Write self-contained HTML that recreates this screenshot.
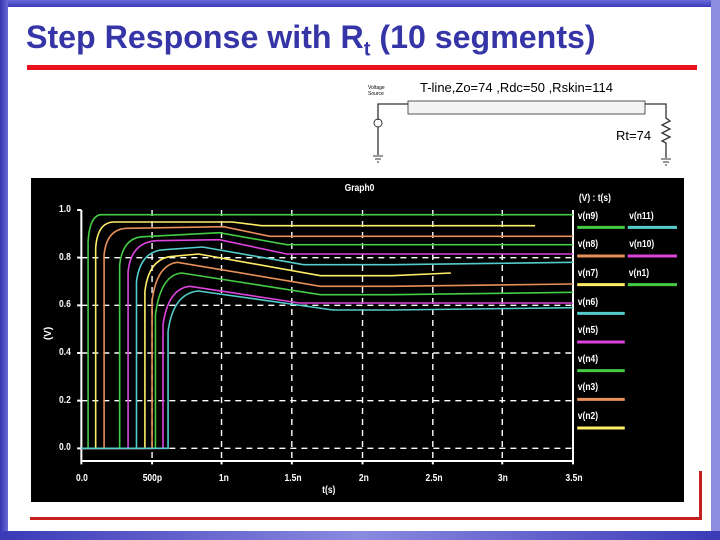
<!DOCTYPE html>
<html><head><meta charset="utf-8"><style>
body{margin:0;width:720px;height:540px;position:relative;background:#fff;overflow:hidden;font-family:"Liberation Sans",sans-serif}
.a{position:absolute}
.t{font-size:10px;color:#fff;font-weight:bold;transform:scaleX(.85)}
</style></head><body>
<div class="a" style="left:0;top:0;width:720px;height:7px;background:linear-gradient(#6868d8,#3a3ab8)"></div>
<div class="a" style="left:0;top:0;width:8px;height:540px;background:linear-gradient(90deg,#3434b0,#6a6ad8)"></div>
<div class="a" style="left:711px;top:0;width:9px;height:540px;background:#8c8ce0"></div>
<div class="a" style="left:0;top:531px;width:720px;height:9px;background:linear-gradient(90deg,#3a3ab8,#8a8ae0 50%,#3a3ab8)"></div>
<div class="a" style="left:26px;top:19px;font-size:32px;font-weight:bold;color:#3535a8;white-space:nowrap;transform:scaleX(1.005);transform-origin:left">Step Response with R<sub style="font-size:20px">t</sub> (10 segments)</div>
<div class="a" style="left:27px;top:65px;width:670px;height:5px;background:#e8121a"></div>
<div class="a" style="left:30px;top:517px;width:671px;height:3px;background:#c42020"></div>
<div class="a" style="left:699px;top:471px;width:3px;height:49px;background:#c42020"></div>

<svg class="a" style="left:355px;top:72px" width="330" height="95">
<text x="65" y="20" font-size="13" font-family="Liberation Sans" textLength="193" lengthAdjust="spacingAndGlyphs">T-line,Zo=74 ,Rdc=50 ,Rskin=114</text>
<text x="13" y="17" font-size="5">Voltage</text><text x="13" y="23" font-size="5">Source</text>
<rect x="53" y="29" width="237" height="13" fill="#f4f4f4" stroke="#555"/>
<path d="M23 48V32H53M290 32H311V46l4 3-8 4 8 4-8 4 8 4-8 4 4 2V86M23 55V83" stroke="#333" fill="none" stroke-width="1.3"/>
<circle cx="23" cy="51" r="4" fill="none" stroke="#333"/>
<path d="M18 84h10M20 87h6M22 90h2M306 87h10M308 90h6M310 93h2" stroke="#333"/>
<text x="261" y="68" font-size="13" font-family="Liberation Sans">Rt=74</text>
</svg>

<div class="a" style="left:31px;top:178px;width:653px;height:324px;background:#000"></div>
<svg class="a" style="left:30px;top:175px" width="660" height="365" viewBox="0 0 1568 1095" preserveAspectRatio="none">
<g stroke="#fff" stroke-dasharray="6 5" fill="none" stroke-width="1.4">
<path d="M290 105V858M455 105V858M622 105V858M790 105V858M957 105V858M1122 105V858M122 248H1290M122 391H1290M122 534H1290M122 677H1290M122 820H1290" vector-effect="non-scaling-stroke"/>
</g>
<path d="M122 105V858H1290V105M122 858v10M290 858v10M455 858v10M622 858v10M790 858v10M957 858v10M1122 858v10M1290 858v10M112 105h10M112 248h10M112 391h10M112 534h10M112 677h10M112 820h10" stroke="#fff" fill="none" stroke-width="2" vector-effect="non-scaling-stroke"/>
<g fill="none" stroke-width="1.6">
<path vector-effect="non-scaling-stroke" stroke="#44cc44" d="M122 820H138V200Q142 119 170 119H1290"/>
<path vector-effect="non-scaling-stroke" stroke="#ffee66" d="M122 820H156V220Q160 141 200 141H480L550 152H1200"/>
<path vector-effect="non-scaling-stroke" stroke="#e8905a" d="M122 820H176V240Q182 162 230 160L460 155L570 184H1290"/>
<path vector-effect="non-scaling-stroke" stroke="#44cc44" d="M122 820H213V270Q220 187 270 185L450 173L610 209H1290"/>
<path vector-effect="non-scaling-stroke" stroke="#dd44dd" d="M122 820H233V290Q240 202 300 197L450 194L610 237H1290"/>
<path vector-effect="non-scaling-stroke" stroke="#55cccc" d="M122 820H253V320Q262 227 320 224L410 216L650 269H860L1290 262"/>
<path vector-effect="non-scaling-stroke" stroke="#ffee66" d="M122 820H273V350Q282 248 340 244L400 237L690 302H860L1000 294"/>
<path vector-effect="non-scaling-stroke" stroke="#e8905a" d="M122 820H290V380Q300 270 350 262L690 334H860L1290 327"/>
<path vector-effect="non-scaling-stroke" stroke="#44cc44" d="M122 820H298V420Q310 300 360 294L690 359H860L1290 352"/>
<path vector-effect="non-scaling-stroke" stroke="#dd44dd" d="M122 820H316V450Q328 340 380 334L640 384H860L1290 384"/>
<path vector-effect="non-scaling-stroke" stroke="#55cccc" d="M122 820H328V470Q340 355 400 348L720 405H860L1290 398"/>
</g>
<g stroke-width="3">
<path vector-effect="non-scaling-stroke" stroke="#44cc44" d="M1300 157H1413"/><path vector-effect="non-scaling-stroke" stroke="#55cccc" d="M1420 157H1537"/>
<path vector-effect="non-scaling-stroke" stroke="#e8905a" d="M1300 243H1413"/><path vector-effect="non-scaling-stroke" stroke="#dd44dd" d="M1420 243H1537"/>
<path vector-effect="non-scaling-stroke" stroke="#ffee66" d="M1300 329H1413"/><path vector-effect="non-scaling-stroke" stroke="#44cc44" d="M1420 329H1537"/>
<path vector-effect="non-scaling-stroke" stroke="#55cccc" d="M1300 415H1413"/>
<path vector-effect="non-scaling-stroke" stroke="#dd44dd" d="M1300 501H1413"/>
<path vector-effect="non-scaling-stroke" stroke="#44cc44" d="M1300 587H1413"/>
<path vector-effect="non-scaling-stroke" stroke="#e8905a" d="M1300 673H1413"/>
<path vector-effect="non-scaling-stroke" stroke="#ffee66" d="M1300 759H1413"/>
</g>
</svg>
<div class="a t" style="left:342px;top:183px">Graph0</div>
<div class="a t" style="left:576px;top:193px">(V) : t(s)</div>
<div class="a t" style="left:576px;top:211px">v(n9)</div><div class="a t" style="left:627px;top:211px">v(n11)</div>
<div class="a t" style="left:576px;top:239px">v(n8)</div><div class="a t" style="left:627px;top:239px">v(n10)</div>
<div class="a t" style="left:576px;top:268px">v(n7)</div><div class="a t" style="left:627px;top:268px">v(n1)</div>
<div class="a t" style="left:576px;top:297px">v(n6)</div>
<div class="a t" style="left:576px;top:325px">v(n5)</div>
<div class="a t" style="left:576px;top:354px">v(n4)</div>
<div class="a t" style="left:576px;top:382px">v(n3)</div>
<div class="a t" style="left:576px;top:411px">v(n2)</div>
<div class="a t" style="left:58px;top:204px">1.0</div>
<div class="a t" style="left:58px;top:252px">0.8</div>
<div class="a t" style="left:58px;top:299px">0.6</div>
<div class="a t" style="left:58px;top:347px">0.4</div>
<div class="a t" style="left:58px;top:395px">0.2</div>
<div class="a t" style="left:58px;top:442px">0.0</div>
<div class="a t" style="left:42px;top:328px;transform:rotate(-90deg)">(V)</div>
<div class="a t" style="left:75px;top:473px">0.0</div>
<div class="a t" style="left:141px;top:473px">500p</div>
<div class="a t" style="left:218px;top:473px">1n</div>
<div class="a t" style="left:283px;top:473px">1.5n</div>
<div class="a t" style="left:358px;top:473px">2n</div>
<div class="a t" style="left:424px;top:473px">2.5n</div>
<div class="a t" style="left:497px;top:473px">3n</div>
<div class="a t" style="left:564px;top:473px">3.5n</div>
<div class="a t" style="left:321px;top:485px">t(s)</div>
</body></html>
